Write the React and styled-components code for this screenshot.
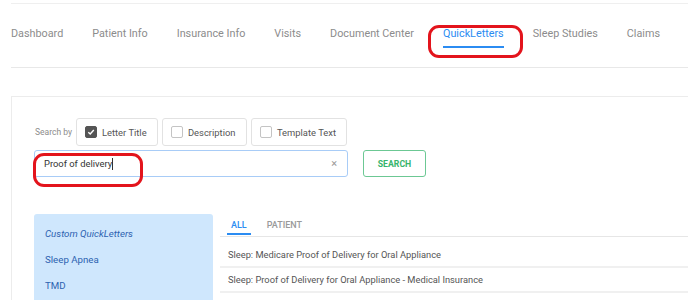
import styled, { createGlobalStyle } from "styled-components";

const GlobalStyle = createGlobalStyle`
  body {
    margin: 0;
    background: #ffffff;
    font-family: Roboto, "Liberation Sans", sans-serif;
  }
`;

const Page = styled.div`
  width: 688px;
  height: 300px;
  overflow: hidden;
  padding-left: 11px;
  box-sizing: border-box;
`;

const Nav = styled.nav`
  margin-top: 3px;
  height: 63px;
  border-top: 1px solid #efefef;
  border-bottom: 1px solid #e8e8e8;
  display: flex;
  align-items: flex-start;
  gap: 29px;
  white-space: nowrap;
`;

const NavTab = styled.div`
  position: relative;
  font-size: 10.8px;
  color: ${(p) => (p.active ? "#2b8cf2" : "#8c8c8c")};
  margin-top: 23px;
  padding-bottom: 5px;
  line-height: 14px;
  border-bottom: 2px solid ${(p) => (p.active ? "#2b8cf2" : "transparent")};
`;

const Marker = styled.span`
  position: absolute;
  left: ${(p) => p.left}px;
  top: ${(p) => p.top}px;
  width: ${(p) => p.w}px;
  height: ${(p) => p.h}px;
  border: 3px solid #e3141c;
  border-radius: 11px;
  box-sizing: border-box;
  pointer-events: none;
`;

const Card = styled.section`
  margin-top: 28px;
  border-top: 1px solid #ececec;
  border-left: 1px solid #ececec;
  padding: 21px 0 0 22px;
  height: 300px;
`;

const SearchRow = styled.div`
  display: flex;
  align-items: center;
  gap: 4px;
`;

const SearchLabel = styled.span`
  font-size: 8.5px;
  color: #8c8c8c;
  margin: 0 0 0 1px;
`;

const OptionBox = styled.label`
  display: flex;
  align-items: center;
  gap: 5px;
  height: 28px;
  padding: 0 0 0 8px;
  width: ${(p) => p.w}px;
  border: 1px solid #e2e2e2;
  border-radius: 3px;
  box-sizing: border-box;
  font-size: 9.4px;
  color: #555;
`;

const Check = styled.span`
  width: 12px;
  height: 12px;
  border-radius: 2px;
  box-sizing: border-box;
  border: 1px solid ${(p) => (p.checked ? "#555" : "#c4c4c4")};
  background: ${(p) => (p.checked ? "#555" : "#fff")};
  display: flex;
  align-items: center;
  justify-content: center;
`;

const InputRow = styled.div`
  display: flex;
  align-items: center;
  gap: 15px;
  margin-top: 4px;
`;

const InputBox = styled.div`
  position: relative;
  width: 314px;
  height: 27px;
  border: 1px solid #a8ccf7;
  border-radius: 3px;
  box-sizing: border-box;
  display: flex;
  align-items: center;
  padding: 0 10px 0 9px;
  font-size: 9.4px;
  color: #333;
`;

const Caret = styled.span`
  display: inline-block;
  width: 1px;
  height: 12px;
  background: #333;
`;

const Clear = styled.span`
  margin-left: auto;
  font-size: 11px;
  color: #999;
`;

const SearchButton = styled.button`
  width: 63px;
  height: 27px;
  border: 1px solid #6cc894;
  border-radius: 3px;
  background: #fff;
  color: #37b56c;
  font-family: Roboto, "Liberation Sans", sans-serif;
  font-size: 8.7px;
  font-weight: 700;
  padding: 0;
`;

const Lower = styled.div`
  display: flex;
  gap: 7px;
  margin-top: 37px;
`;

const Sidebar = styled.ul`
  list-style: none;
  margin: 0;
  padding: 13px 0 0;
  width: 179px;
  height: 120px;
  background: #cfe7fd;
  border-radius: 3px 3px 0 0;
`;

const SideItem = styled.li`
  height: 26px;
  line-height: 14px;
  padding-left: 11px;
  font-size: 9.7px;
  color: #2c62b0;
  font-style: ${(p) => (p.italic ? "italic" : "normal")};
`;

const Results = styled.div`
  flex: 1;
`;

const SubTabs = styled.div`
  display: flex;
  gap: 12px;
  height: 22px;
  border-bottom: 1px solid #e6e6e6;
  padding-left: 7px;
`;

const SubTab = styled.div`
  font-size: 9px;
  font-weight: 500;
  color: ${(p) => (p.active ? "#2b8cf2" : "#9a9a9a")};
  padding: 6px 4px 0;
  height: 21px;
  box-sizing: border-box;
  border-bottom: 2px solid ${(p) => (p.active ? "#2b8cf2" : "transparent")};
`;

const ResultRow = styled.div`
  height: 25px;
  margin-top: ${(p) => (p.first ? 6 : 0)}px;
  box-sizing: border-box;
  padding-left: 8px;
  display: flex;
  align-items: center;
  font-size: 9.3px;
  color: #555;
  border-bottom: 2px solid #f0f0f0;
  white-space: nowrap;
`;

const tabs = [
  "Dashboard",
  "Patient Info",
  "Insurance Info",
  "Visits",
  "Document Center",
  "QuickLetters",
  "Sleep Studies",
  "Claims",
];

const App = () => {
  return (
    <Page>
      <GlobalStyle />
      <Nav>
        {tabs.map((t) => (
          <NavTab key={t} active={t === "QuickLetters"}>
            {t}
            {t === "QuickLetters" && <Marker left={-15} top={-2} w={95} h={33} />}
          </NavTab>
        ))}
      </Nav>
      <Card>
        <SearchRow>
          <SearchLabel>Search by</SearchLabel>
          <OptionBox w={82}>
            <Check checked>
              <svg width="8" height="8" viewBox="0 0 8 8">
                <path d="M1.3 4.2 L3.2 6 L6.8 2" fill="none" stroke="#fff" strokeWidth="1.4" />
              </svg>
            </Check>
            Letter Title
          </OptionBox>
          <OptionBox w={85}>
            <Check />
            Description
          </OptionBox>
          <OptionBox w={96}>
            <Check />
            Template Text
          </OptionBox>
        </SearchRow>
        <InputRow>
          <InputBox>
            Proof of delivery
            <Caret />
            <Clear>×</Clear>
            <Marker left={-2} top={2} w={110} h={34} />
          </InputBox>
          <SearchButton>SEARCH</SearchButton>
        </InputRow>
        <Lower>
          <Sidebar>
            <SideItem italic>Custom QuickLetters</SideItem>
            <SideItem>Sleep Apnea</SideItem>
            <SideItem>TMD</SideItem>
          </Sidebar>
          <Results>
            <SubTabs>
              <SubTab active>ALL</SubTab>
              <SubTab>PATIENT</SubTab>
            </SubTabs>
            <ResultRow first>Sleep: Medicare Proof of Delivery for Oral Appliance</ResultRow>
            <ResultRow>Sleep: Proof of Delivery for Oral Appliance - Medical Insurance</ResultRow>
          </Results>
        </Lower>
      </Card>
    </Page>
  );
};

export default App;
